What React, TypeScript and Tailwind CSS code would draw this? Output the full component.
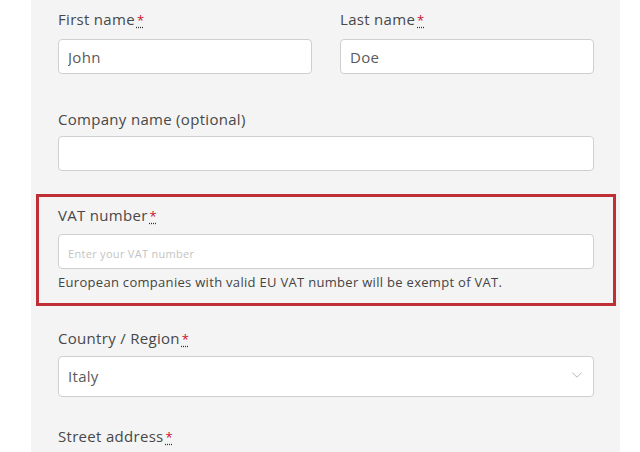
import { ChevronDown } from "lucide-react";

function Req() {
  return (
    <abbr
      title="required"
      className="ml-[2px] text-[13px] text-[#c8102e] underline decoration-dotted decoration-[#333] underline-offset-2"
    >
      *
    </abbr>
  );
}

function Label({ children }: { children: React.ReactNode }) {
  return (
    <label className="block text-[15px] leading-5 text-[#484848]">{children}</label>
  );
}

function TextInput({ value, placeholder }: { value?: string; placeholder?: string }) {
  return (
    <input
      type="text"
      defaultValue={value}
      placeholder={placeholder}
      className="block h-[35px] w-full rounded-[4px] border border-[#cfcfcf] bg-white px-[9px] text-[15px] tracking-[0.3px] text-[#5a5a5a] outline-none placeholder:text-[11px] placeholder:text-[#c4c4c4]"
    />
  );
}

export default function App() {
  return (
    <div
      className="flex h-[452px] w-[640px] overflow-hidden bg-white tracking-[0.3px]"
      style={{ fontFamily: '"Open Sans", "Liberation Sans", sans-serif' }}
    >
      <div className="w-[31px] shrink-0" />
      <div className="w-[589px] shrink-0 bg-[#f4f4f4] pt-[9px] pl-[5px] pr-[4px]">
        <div className="grid grid-cols-2 gap-x-[28px] px-[22px]">
          <div>
            <Label>
              First name<Req />
            </Label>
            <div className="mt-[9px]">
              <TextInput value="John" />
            </div>
          </div>
          <div>
            <Label>
              Last name<Req />
            </Label>
            <div className="mt-[9px]">
              <TextInput value="Doe" />
            </div>
          </div>
        </div>

        <div className="mt-[35px] px-[22px]">
          <Label>Company name (optional)</Label>
          <div className="mt-[7px]">
            <TextInput />
          </div>
        </div>

        <div className="mt-[23px] border-[3px] border-[#bf2f35] px-[19px] pt-[8px] pb-[12px]">
          <Label>
            VAT number<Req />
          </Label>
          <div className="mt-[8px]">
            <TextInput placeholder="Enter your VAT number" />
          </div>
          <p className="mt-[4px] text-[13px] leading-[18px] text-[#444]">
            European companies with valid EU VAT number will be exempt of VAT.
          </p>
        </div>

        <div className="mt-[22px] px-[22px]">
          <Label>
            Country / Region<Req />
          </Label>
          <div className="relative mt-[7px]">
            <div className="flex h-[41px] w-full items-center rounded-[4px] border border-[#cfcfcf] bg-white px-[9px] text-[15px] text-[#5a5a5a]">
              Italy
            </div>
            <ChevronDown
              className="absolute top-[10px] right-[8px] h-[18px] w-[18px] text-[#b0b0b0]"
              strokeWidth={1.2}
            />
          </div>
        </div>

        <div className="mt-[29px] px-[22px]">
          <Label>
            Street address<Req />
          </Label>
        </div>
      </div>
    </div>
  );
}
